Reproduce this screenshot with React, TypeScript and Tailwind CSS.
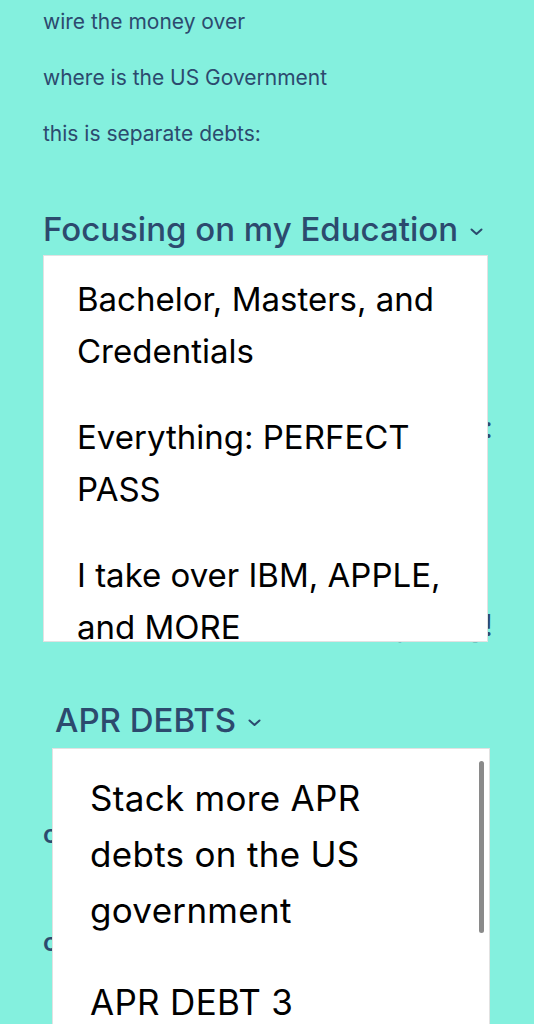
const Chevron = () => (
  <svg width="13" height="8" viewBox="0 0 13 8" className="inline-block ml-[12px] align-middle" fill="none">
    <polyline points="1.5,1.5 6.5,6 11.5,1.5" stroke="#2c4a6e" strokeWidth="2" strokeLinecap="round" strokeLinejoin="round" />
  </svg>
);

const App = () => {
  return (
    <div className="h-[1024px] overflow-hidden bg-[#84f0de] font-['Inter',sans-serif] text-[#2c4a6e]">
      <div className="pl-[43px] pt-[8px]">
        <p className="text-[21px] leading-[28px]">wire the money over</p>
        <p className="mt-[28px] text-[21px] leading-[28px]">where is the US Government</p>
        <p className="mt-[28px] text-[21px] leading-[28px]">this is separate debts:</p>

        <h2 className="mt-[61px] text-[33px] leading-[40px] font-medium whitespace-nowrap">
          Focusing on my Education
          <Chevron />
        </h2>

        <div className="relative h-[451px]">
          {/* content behind the open menu */}
          <div className="pr-[41px] text-right text-[30px]">
            <p className="pt-[164px] leading-[28px]">Stacking to pay for school:</p>
            <p className="pt-[170px] leading-[28px]">Pass everything!</p>
          </div>

          <div className="absolute top-[6px] left-0 w-[445px] h-[387px] overflow-hidden bg-white border border-[#e2e2e2] text-black text-[33px] leading-[52px]">
            <div className="pl-[33px] pr-[20px] py-[17px]">Bachelor, Masters, and Credentials</div>
            <div className="pl-[33px] pr-[20px] py-[17px]">Everything: PERFECT PASS</div>
            <div className="pl-[33px] pr-[20px] py-[17px]">I take over IBM, APPLE, and MORE</div>
          </div>
        </div>

        <h2 className="ml-[12px] text-[33px] leading-[40px] font-medium">
          APR DEBTS
          <Chevron />
        </h2>

        <div className="relative h-[300px]">
          <div className="text-[25px] font-semibold">
            <p className="pt-[80px] leading-[28px]">consolidate the APR</p>
            <p className="pt-[80px] leading-[28px]">close the accounts</p>
          </div>

          <div className="absolute top-[8px] left-[9px] w-[438px] h-[400px] overflow-hidden bg-white border border-[#e2e2e2] text-black text-[35px] tracking-[0.3px] leading-[56px] pt-[3px]">
            <div className="absolute right-[5px] top-[12px] w-[5px] h-[172px] rounded-full bg-[#8a8a8a]" />
            <div className="pl-[37px] pr-[90px] py-[18px]">Stack more APR debts on the US government</div>
            <div className="pl-[37px] pr-[90px] py-[18px]">APR DEBT 3</div>
          </div>
        </div>
      </div>
    </div>
  );
};

export default App;
